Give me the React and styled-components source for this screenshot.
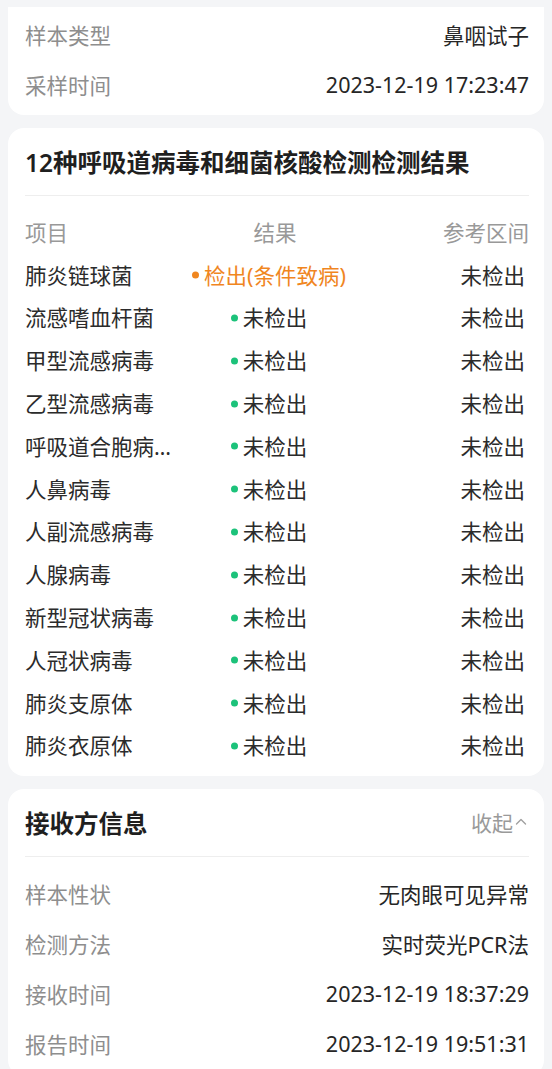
import React from "react"
import styled, { createGlobalStyle } from "styled-components"

const GlobalStyle = createGlobalStyle`
  html, body {
    margin: 0;
    padding: 0;
    background: #f4f5f7;
  }
  body {
    font-family: "Noto Sans", "Noto Sans CJK SC", sans-serif;
    -webkit-font-smoothing: antialiased;
  }
`

const sampleInfo = [
  { label: "样本类型", value: "鼻咽试子" },
  { label: "采样时间", value: "2023-12-19 17:23:47" }
]

const results = [
  { name: "肺炎链球菌", result: "检出(条件致病)", positive: true },
  { name: "流感嗜血杆菌", result: "未检出" },
  { name: "甲型流感病毒", result: "未检出" },
  { name: "乙型流感病毒", result: "未检出" },
  { name: "呼吸道合胞病毒", result: "未检出" },
  { name: "人鼻病毒", result: "未检出" },
  { name: "人副流感病毒", result: "未检出" },
  { name: "人腺病毒", result: "未检出" },
  { name: "新型冠状病毒", result: "未检出" },
  { name: "人冠状病毒", result: "未检出" },
  { name: "肺炎支原体", result: "未检出" },
  { name: "肺炎衣原体", result: "未检出" }
]

const receiverInfo = [
  { label: "样本性状", value: "无肉眼可见异常" },
  { label: "检测方法", value: "实时荧光PCR法" },
  { label: "接收时间", value: "2023-12-19 18:37:29" },
  { label: "报告时间", value: "2023-12-19 19:51:31" }
]

export default function App() {
  return (
    <Page>
      <GlobalStyle />

      <TopCard>
        {sampleInfo.map(item => (
          <InfoRow key={item.label}>
            <Label>{item.label}</Label>
            <Value>{item.value}</Value>
          </InfoRow>
        ))}
      </TopCard>

      <Card $bottom={10}>
        <CardHeader>
          <Title>12种呼吸道病毒和细菌核酸检测检测结果</Title>
        </CardHeader>
        <Table>
          <TableRow $head>
            <Cell>项目</Cell>
            <Cell $center>结果</Cell>
            <Cell $right>参考区间</Cell>
          </TableRow>
          {results.map(row => (
            <TableRow key={row.name}>
              <Cell>{row.name}</Cell>
              <Cell $center>
                <Result $positive={row.positive}>{row.result}</Result>
              </Cell>
              <Cell $right $inset>未检出</Cell>
            </TableRow>
          ))}
        </Table>
      </Card>

      <Card>
        <CardHeader>
          <Title>接收方信息</Title>
          <Toggle>
            收起
            <svg width="14" height="14" viewBox="0 0 14 14" fill="none">
              <polyline points="2.5,9 7,4.5 11.5,9" stroke="#a0a0a0" strokeWidth="1.4" strokeLinecap="round" strokeLinejoin="round" />
            </svg>
          </Toggle>
        </CardHeader>
        <InfoList>
          {receiverInfo.map(item => (
            <InfoRow key={item.label}>
              <Label>{item.label}</Label>
              <Value>{item.value}</Value>
            </InfoRow>
          ))}
        </InfoList>
      </Card>
    </Page>
  )
}

const Page = styled.div`
  background: #f4f5f7;
  display: flex;
  flex-direction: column;
  gap: 13px;
  min-height: 100vh;
  padding: 7px 8px 0;
  box-sizing: border-box;
`

const Card = styled.section`
  background: #fff;
  border-radius: 16px;
  padding: 0 15px ${p => p.$bottom || 8}px 17px;
`

const TopCard = styled(Card)`
  border-radius: 0 0 16px 16px;
  padding-top: 2px;
  padding-bottom: 6px;
`

const InfoList = styled.div`
  padding-top: 11px;
`

const InfoRow = styled.div`
  align-items: center;
  display: flex;
  height: 50px;
  justify-content: space-between;
`

const Label = styled.span`
  color: #8e8e8e;
  font-size: 21.5px;
`

const Value = styled.span`
  color: #262626;
  font-size: 21.5px;
`

const CardHeader = styled.div`
  align-items: center;
  border-bottom: 1px solid #eeeeee;
  box-sizing: border-box;
  display: flex;
  height: 68px;
  justify-content: space-between;
  padding-bottom: 1px;
`

const Title = styled.h2`
  color: #1f1f1f;
  font-size: 24.5px;
  font-weight: 600;
  margin: 0;
`

const Toggle = styled.span`
  align-items: center;
  color: #9a9a9a;
  display: flex;
  font-size: 21px;
  gap: 1px;
  margin-right: 1px;
`

const Table = styled.div`
  padding-top: 14px;
`

const TableRow = styled.div`
  align-items: center;
  color: ${p => (p.$head ? "#999999" : "#2b2b2b")};
  display: grid;
  font-size: 21.5px;
  grid-template-columns: 150px 200px 1fr;
  height: 42.8px;
`

const Cell = styled.div`
  overflow: ${p => (p.$center ? "visible" : "hidden")};
  padding-right: ${p => (p.$inset ? "4px" : "0")};
  text-align: ${p => (p.$center ? "center" : p.$right ? "right" : "left")};
  text-overflow: ellipsis;
  white-space: nowrap;
`

const Result = styled.span`
  color: ${p => (p.$positive ? "#f0861f" : "#2b2b2b")};
  position: relative;

  &::before {
    background: ${p => (p.$positive ? "#f0861f" : "#1cc27a")};
    border-radius: 50%;
    content: "";
    height: 7px;
    left: -12px;
    position: absolute;
    top: 50%;
    transform: translateY(-50%);
    width: 7px;
  }
`
